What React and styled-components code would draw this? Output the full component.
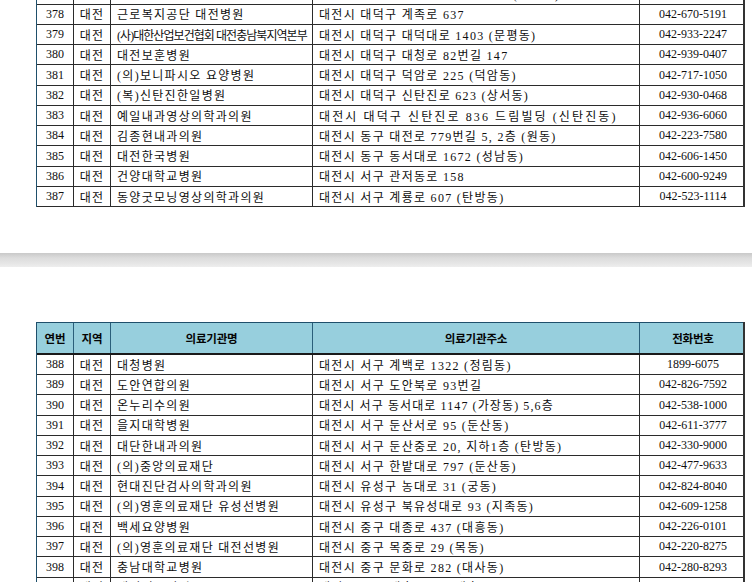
import styled, { createGlobalStyle } from 'styled-components';

const GlobalStyle = createGlobalStyle`
  html, body {
    margin: 0;
    padding: 0;
    background: #ffffff;
  }
  body {
    font-family: "Liberation Serif", "Noto Sans CJK KR", serif;
    color: #0f0f0f;
  }
`;

const COLS = '37px 37px 202px 327px 106px';

// [연번, 지역, 기관명, 주소, 전화, 기관명 자간, 주소 자간]
const topRows = [
  ['377', '대전', '대전보건대학교 부설 의원', '대전시 대덕구 대화로 106번길 66 (대화동)', '042-632-0114'],
  ['378', '대전', '근로복지공단 대전병원', '대전시 대덕구 계족로 637', '042-670-5191'],
  ['379', '대전', '(사)대한산업보건협회 대전충남북지역본부', '대전시 대덕구 대덕대로 1403 (문평동)', '042-933-2247', '-0.95px'],
  ['380', '대전', '대전보훈병원', '대전시 대덕구 대청로 82번길 147', '042-939-0407'],
  ['381', '대전', '(의)보니파시오 요양병원', '대전시 대덕구 덕암로 225 (덕암동)', '042-717-1050'],
  ['382', '대전', '(복)신탄진한일병원', '대전시 대덕구 신탄진로 623 (상서동)', '042-930-0468'],
  ['383', '대전', '예일내과영상의학과의원', '대전시 대덕구 신탄진로 836 드림빌딩 (신탄진동)', '042-936-6060', null, '2.1px'],
  ['384', '대전', '김종현내과의원', '대전시 동구 대전로 779번길 5, 2층 (원동)', '042-223-7580'],
  ['385', '대전', '대전한국병원', '대전시 동구 동서대로 1672 (성남동)', '042-606-1450'],
  ['386', '대전', '건양대학교병원', '대전시 서구 관저동로 158', '042-600-9249'],
  ['387', '대전', '동양굿모닝영상의학과의원', '대전시 서구 계룡로 607 (탄방동)', '042-523-1114'],
];

const bottomRows = [
  ['388', '대전', '대청병원', '대전시 서구 계백로 1322 (정림동)', '1899-6075'],
  ['389', '대전', '도안연합의원', '대전시 서구 도안북로 93번길', '042-826-7592'],
  ['390', '대전', '온누리수의원', '대전시 서구 동서대로 1147 (가장동) 5,6층', '042-538-1000', null, '1.1px'],
  ['391', '대전', '을지대학병원', '대전시 서구 둔산서로 95 (둔산동)', '042-611-3777'],
  ['392', '대전', '대단한내과의원', '대전시 서구 둔산중로 20, 지하1층 (탄방동)', '042-330-9000'],
  ['393', '대전', '(의)중앙의료재단', '대전시 서구 한밭대로 797 (둔산동)', '042-477-9633'],
  ['394', '대전', '현대진단검사의학과의원', '대전시 유성구 농대로 31 (궁동)', '042-824-8040'],
  ['395', '대전', '(의)영훈의료재단 유성선병원', '대전시 유성구 북유성대로 93 (지족동)', '042-609-1258'],
  ['396', '대전', '백세요양병원', '대전시 중구 대종로 437 (대흥동)', '042-226-0101'],
  ['397', '대전', '(의)영훈의료재단 대전선병원', '대전시 중구 목중로 29 (목동)', '042-220-8275'],
  ['398', '대전', '충남대학교병원', '대전시 중구 문화로 282 (대사동)', '042-280-8293'],
  ['399', '대전', '대전성모병원', '대전시 중구 대흥로 64 (대흥동)', '042-220-9114'],
];

const Viewer = styled.div`
  width: 752px;
  height: 582px;
  overflow: hidden;
  background: #ffffff;
`;

const Page = styled.section`
  background: #ffffff;
  overflow: hidden;
  height: ${(p) => p.height};
  padding-top: ${(p) => p.pad || '0px'};
  box-sizing: border-box;
`;

const PageGap = styled.div`
  height: 14px;
  background: linear-gradient(#c9c9c9 0%, #dcdcdc 35%, #e6e6e6 75%, #eeeeee 100%);
`;

const Table = styled.div`
  margin-left: 36px;
  width: 709px;
  border-left: 1px solid #1f4f6b;
  border-right: 2px solid #333333;
  box-sizing: border-box;
  margin-top: ${(p) => p.offset || '0px'};
`;

const HeadRow = styled.div`
  display: grid;
  grid-template-columns: ${COLS};
  height: 33.3px;
  background: #97cfdd;
  border-top: 1px solid #1f4f6b;
  border-bottom: 2px solid #1a1a1a;
  box-sizing: border-box;
`;

const HeadCell = styled.div`
  display: flex;
  align-items: center;
  justify-content: center;
  font-family: "Noto Sans CJK KR", sans-serif;
  font-weight: 700;
  font-size: 11.5px;
  color: #050505;
  letter-spacing: -0.2px;
  border-right: 1px solid #2a5f7a;
  &:last-child {
    border-right: none;
  }
`;

const Row = styled.div`
  display: grid;
  grid-template-columns: ${COLS};
  height: 20.25px;
  border-bottom: 1px solid #2b2b2b;
  box-sizing: border-box;
`;

const Cell = styled.div`
  display: flex;
  align-items: center;
  justify-content: ${(p) => (p.center ? 'center' : 'flex-start')};
  padding-left: ${(p) => (p.center ? '0' : '6px')};
  font-size: 12px;
  letter-spacing: ${(p) => p.spacing || (p.phone ? '0' : '1.3px')};
  white-space: nowrap;
  overflow: hidden;
  border-right: 1px solid #2b2b2b;
  &:last-child {
    border-right: none;
  }
`;

const DataRow = ({ row }) => {
  const [no, region, name, addr, phone, nameSpacing, addrSpacing] = row;
  return (
    <Row>
      <Cell center phone>{no}</Cell>
      <Cell center>{region}</Cell>
      <Cell spacing={nameSpacing}>{name}</Cell>
      <Cell spacing={addrSpacing}>{addr}</Cell>
      <Cell center phone>{phone}</Cell>
    </Row>
  );
};

export default function App() {
  return (
    <>
      <GlobalStyle />
      <Viewer>
        <Page height="253px">
          <Table offset="-15.55px">
            {topRows.map((r) => (
              <DataRow key={r[0]} row={r} />
            ))}
          </Table>
        </Page>
        <PageGap />
        <Page height="330px" pad="54.7px">
          <Table>
            <HeadRow>
              <HeadCell>연번</HeadCell>
              <HeadCell>지역</HeadCell>
              <HeadCell>의료기관명</HeadCell>
              <HeadCell>의료기관주소</HeadCell>
              <HeadCell>전화번호</HeadCell>
            </HeadRow>
            {bottomRows.map((r) => (
              <DataRow key={r[0]} row={r} />
            ))}
          </Table>
        </Page>
      </Viewer>
    </>
  );
}
